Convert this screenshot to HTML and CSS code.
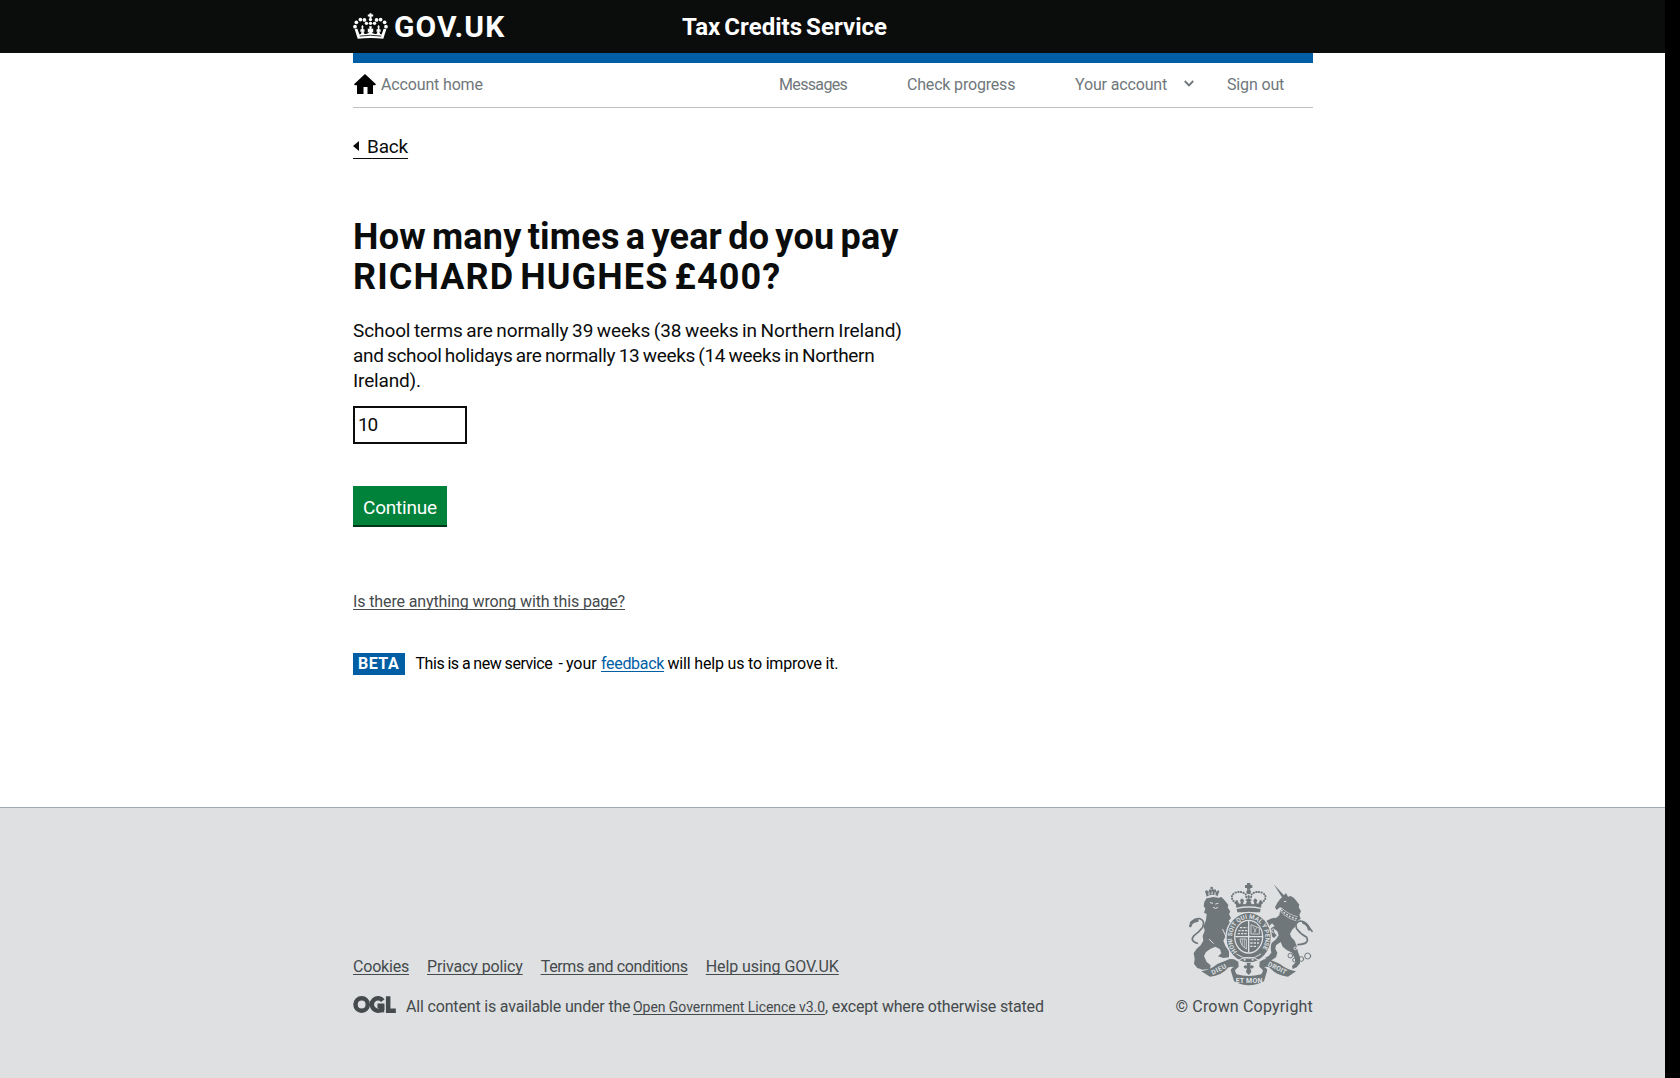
FILE: index.html
```html
<!DOCTYPE html>
<html lang="en">
<head>
<meta charset="utf-8">
<title>Tax Credits Service - GOV.UK</title>
<link rel="stylesheet" href="styles.css">
</head>
<body>
<div class="page">
  <header class="header">
    <div class="container header-inner">
      <a class="logo" href="#">
        <svg class="crown" viewBox="39 39 104 76" aria-hidden="true">
          <g fill="#fff">
            <path d="M88 39H94V43H99V49H94V55H88V49H83V43H88Z"/>
            <circle cx="91" cy="58" r="5"/><circle cx="91" cy="69" r="5"/>
            <circle cx="61" cy="58" r="5.5"/><circle cx="49" cy="66" r="5.5"/><circle cx="45" cy="79" r="5.5"/><circle cx="73" cy="59" r="5.500"/><circle cx="79" cy="69" r="5"/>
            <circle cx="121" cy="58" r="5.5"/><circle cx="133" cy="66" r="5.5"/><circle cx="137" cy="79" r="5.5"/><circle cx="109" cy="59" r="5.500"/><circle cx="103" cy="69" r="5"/>
            <path d="M44 87L52 85L58 102Q64 101 65 93L61 95V87H65L64 78L67 74L70 78L69 87H73V95L70 93Q71 101 78 101Q86 100 88 94L83 96V84L88 87L87 78H95L94 87L99 84V96L94 94Q96 100 104 101Q111 101 112 93L109 95V87H113L112 78L115 74L118 78L117 87H121V95L117 93Q118 101 124 102L130 85L138 87L129 115Q91 110 53 115Z"/>
          </g>
          <path d="M59 107Q91 102 123 107" stroke="#0b0c0c" stroke-width="2.500" fill="none"/>
        </svg>
        <span class="logo-text">GOV.UK</span>
      </a>
      <span class="service-name">Tax Credits Service</span>
    </div>
  </header>
  <div class="container">
    <nav class="nav">
      <a class="nav-home" href="#">
        <svg class="home" viewBox="0 0 22 20" aria-hidden="true"><path d="M11 0l11 10.300-1 .9h-2V20h-5.500v-7h-4v7H3v-8.800H1l-1-.9z"/></svg>
        <span>Account home</span>
      </a>
      <a class="nav-item messages" href="#">Messages</a>
      <a class="nav-item progress" href="#">Check progress</a>
      <a class="nav-item account" href="#">Your account
        <svg class="chevron" viewBox="0 0 10 7" aria-hidden="true"><path d="M.8 1L5 5.300 9.200 1" fill="none" stroke="currentColor" stroke-width="1.900"/></svg>
      </a>
      <a class="nav-item signout" href="#">Sign out</a>
    </nav>
    <main class="main">
      <a class="back" href="#"><span class="back-arrow"></span>Back</a>
      <h1 class="heading"><span class="heading-first">How many times a year do you pay</span> <span class="heading-second">RICHARD HUGHES £400?</span></h1>
      <p class="hint"><span class="hint-first">School terms are normally 39 weeks (38 weeks in Northern Ireland)</span> <span class="hint-second">and school holidays are normally 13 weeks (14 weeks in Northern</span> <span class="hint-third">Ireland).</span></p>
      <input class="input" type="text" value="10" aria-label="Times a year">
      <button class="button" type="button">Continue</button>
      <a class="problem" href="#">Is there anything wrong with this page?</a>
      <div class="phase">
        <strong class="tag">BETA</strong>
        <span class="phase-start">This is a new service</span>
        <span class="phase-your">- your</span>
        <a class="feedback" href="#">feedback</a>
        <span class="phase-end">will help us to improve it.</span>
      </div>
    </main>
  </div>
  <footer class="footer">
    <div class="container footer-inner">
      <div class="footer-meta">
        <div class="footer-links">
          <a class="cookies" href="#">Cookies</a>
          <a class="privacy" href="#">Privacy policy</a>
          <a class="terms" href="#">Terms and conditions</a>
          <a class="help" href="#">Help using GOV.UK</a>
        </div>
        <div class="licence">
          <svg class="ogl" viewBox="0 0 128 51" aria-label="OGL">
            <g fill="none" stroke="#454a4c" stroke-width="13.500">
              <circle cx="25.500" cy="25.500" r="18.500"/>
              <path d="M89 14A18.500 18.500 0 1 0 87 39V29H73"/>
              <path d="M105 1V44H128"/>
            </g>
            <path fill="#454a4c" d="M83 27h10v22H83z"/>
          </svg>
          <span class="licence-text">All content is available under the</span>
          <a class="licence-link" href="#">Open Government Licence v3.0</a><span class="licence-end">, except where otherwise stated</span>
        </div>
      </div>
      <div class="copyright">
        <svg class="arms" viewBox="84 36 375 312" aria-hidden="true">
          <g fill="#6f777b">
            <!-- lion -->
            <path d="M140 84L165 80L185 82L195 92L205 105L203 112L211 125L207 132L213 145L206 152L213 162L214 178L218 196L214 214L205 208L196 200L190 212L196 228L207 244L207 262L190 264L174 259L184 250L180 238L166 230L152 236L138 246L132 258L140 276L152 286L150 297L128 299L112 294L102 282L104 266L101 250L110 236L122 226L130 212L128 198L134 182L131 168L138 150L140 132L132 128L136 116L131 108L133 96Z"/>
            <path d="M139 76L135 64L141 60L145 66L149 57L155 60L158 55L162 60L166 57L170 66L174 60L178 64L173 78Q155 70 139 80Z"/>
            <circle cx="155" cy="54" r="4"/>
            <!-- unicorn -->
            <path d="M341 43L372 76L378 69L384 80L392 78L402 84L410 94L418 104L416 112L423 124L418 134L422 146L414 152L408 162L404 172L396 180L390 192L394 202L404 212L410 228L414 246L420 262L420 280L410 292L398 297L396 288L406 278L404 264L396 248L380 240L368 230L362 216L348 226L346 236L352 248L348 262L332 272L314 264L326 258L334 248L332 234L334 220L348 208L356 196L352 184L344 178L344 190L350 196L342 204L332 196L328 184L334 174L344 168L336 160L328 168L330 182L322 180L316 166L320 152L332 146L348 142L358 136L360 124L366 114L360 112L350 120L345 112L352 98L360 88L366 82Z"/>
            <!-- scroll -->
            <path d="M124 304Q150 300 172 282L202 270Q206 266 222 268L235 275L236 290L226 299Q224 290 216 290L206 292Q184 318 150 320Z"/>
            <path d="M408 304Q382 300 360 282L332 270Q326 266 312 268L299 275L298 290L308 299Q310 290 318 290L328 292Q350 318 384 320Z"/>
            <path d="M212 300Q217 288 229 292L225 303L230 313Q266 323 304 313L309 303L305 292Q317 288 322 300L312 334Q266 358 222 334Z"/>
            <path d="M256 296L250 290L256 285L261 288L260 280L266 270L272 280L271 288L276 285L282 290L276 296L271 294L274 306L266 315L258 306L261 294Z"/>
            <!-- central crown -->
            <path d="M261 39H271V45H277V54H271V59H261V54H255V45H261Z"/>
            <circle cx="266" cy="66" r="7"/><circle cx="266" cy="80" r="4"/>
            <path d="M229 113L226 92L232 90L237 101L243 100L240 91L246 85L252 91L249 102L257 103L261 94L256 90L266 84L276 90L271 94L275 103L283 102L280 91L286 85L292 91L289 100L295 101L300 90L306 92L303 113Q266 105 229 113Z"/>
            <path d="M230 117Q266 110 302 117L300 127H232Z"/>
          </g>
          <!-- tails and chain -->
          <g fill="none" stroke="#6f777b" stroke-linecap="round" stroke-linejoin="round">
            <path stroke-width="5" d="M112 220Q88 212 102 197Q118 186 128 172Q136 152 120 146Q104 145 92 158"/>
            <path stroke-width="8" d="M112 152Q94 154 91 168"/>
            <path stroke-width="5" d="M414 224Q450 222 440 202Q420 190 410 176Q403 158 420 153Q434 153 444 168L456 184"/>
            <path stroke-width="8" d="M430 158Q444 162 447 178"/>
            <circle cx="391" cy="257" r="7" stroke-width="3"/><circle cx="404" cy="270" r="6" stroke-width="3"/><circle cx="424" cy="267" r="7" stroke-width="3"/><circle cx="443" cy="258" r="9" stroke-width="3"/>
            <path stroke-width="6" stroke-dasharray="1 7" d="M227 99Q206 82 223 69Q244 61 257 73L260 88M305 99Q326 82 309 69Q288 61 275 73L272 88"/>
          </g>
          <!-- light details on the supporters -->
          <g fill="none" stroke="#dee0e2" stroke-linecap="round">
            <path stroke-width="3" d="M136 84Q156 75 178 82M147 68V74M156 66V72M165 68V74M151 98L158 100M174 100L167 102M160 113Q168 118 173 113M148 208L160 220M188 178L198 200"/>
            <path stroke-width="2" d="M362 125Q382 146 408 152M366 115Q386 134 412 140"/>
            <path stroke-width="5" stroke-dasharray="1 9" d="M365 121Q384 140 408 146"/>
            <circle cx="347" cy="139" r="4" stroke-width="3"/><circle cx="340" cy="182" r="5" stroke-width="3"/><circle cx="411" cy="192" r="4" stroke-width="3"/><circle cx="406" cy="235" r="4" stroke-width="3"/>
            <path stroke-width="3" d="M373 95L378 94"/>
          </g>
          <!-- garter and shield -->
          <ellipse cx="266" cy="202" rx="70" ry="77" fill="#dee0e2"/>
          <ellipse cx="266" cy="203" rx="66" ry="74" fill="#6f777b"/>
          <ellipse cx="266" cy="200" rx="44" ry="51" fill="#dee0e2"/>
          <ellipse cx="266" cy="200" rx="40" ry="47" fill="#6f777b"/>
          <path d="M266 153V247M226 200H306" stroke="#dee0e2" stroke-width="4"/>
          <path d="M240 173H262M235 182H262M233 191H262M271 209H299M271 219H297M271 229H292" fill="none" stroke="#dee0e2" stroke-width="4" stroke-dasharray="7 3"/>
          <path d="M273 164L298 174V192H273ZM240 207H259V237Q242 228 240 207Z" fill="none" stroke="#dee0e2" stroke-width="2.500"/>
          <path d="M247 208V226M253 208V232M279 170L287 186M290 172L281 190" stroke="#dee0e2" stroke-width="2"/>
          <path d="M229 252Q266 278 303 252M232 272Q266 252 300 272" fill="none" stroke="#dee0e2" stroke-width="3"/>
          <circle cx="254" cy="269" r="3" fill="#dee0e2"/><circle cx="278" cy="269" r="3" fill="#dee0e2"/>
          <path id="motto" d="M232 245A50 57 0 1 1 301 244" fill="none"/>
          <g class="arms-text" fill="#dee0e2">
            <text font-size="19"><textPath href="#motto" textLength="248" lengthAdjust="spacingAndGlyphs">HONI SOIT QUI MAL Y PENSE</textPath></text>
            <text font-size="21" x="227" y="339" textLength="80">ET MON</text>
            <text font-size="20" transform="translate(158 315) rotate(-27)" textLength="48">DIEU</text>
            <text font-size="20" transform="translate(322 287) rotate(26)" textLength="60">DROIT</text>
          </g>
        </svg>
        <span class="copyright-text">© Crown Copyright</span>
      </div>
    </div>
  </footer>
</div>
</body>
</html>
```
FILE: styles.css
```css
* { box-sizing: border-box; }
html { background: #000; }
body {
  margin: 0;
  font-family: Roboto, "Liberation Sans", sans-serif;
  font-size: 16px;
  line-height: 21px;
  color: #0b0c0c;
}
a { color: inherit; text-decoration: none; }
.page {
  display: flex;
  flex-direction: column;
  width: 1665px;
  min-height: 1078px;
  background: #fff;
}
.container { width: 960px; margin: 0 352px 0 353px; }

.header { height: 53px; background: #0b0c0c; color: #fff; }
.header-inner { display: flex; align-items: center; height: 53px; }
.logo { display: flex; align-items: center; width: 329px; }
.crown { width: 35px; height: 26px; margin: 0 6px 1px 0; }
.logo-text { font-size: 30px; font-weight: 700; line-height: 53px; letter-spacing: 1.1px; }
.service-name {
  padding-top: 1px;
  font-size: 24px;
  font-weight: 700;
  letter-spacing: 0.04px;
  word-spacing: -2px;
  white-space: nowrap;
}

.nav {
  display: flex;
  height: 55px;
  border-top: 10px solid #005ea5;
  border-bottom: 1px solid #bfc1c3;
  color: #6f777b;
  line-height: 43px;
  letter-spacing: -0.15px;
  white-space: nowrap;
}
.nav-home { display: flex; align-items: center; width: 426px; height: 43px; }
.home { width: 22px; height: 20px; margin: -1px 5px 0 1px; fill: #000; }
.messages { width: 128px; letter-spacing: -0.65px; }
.progress { width: 168px; letter-spacing: -0.18px; }
.account { display: flex; align-items: center; width: 152px; height: 43px; }
.chevron { width: 10px; height: 7px; margin: -3px 0 0 16.5px; }

.main { display: flex; flex-direction: column; align-items: flex-start; }
.back {
  display: flex;
  align-items: center;
  margin-top: 27px;
  border-bottom: 1px solid #0b0c0c;
  font-size: 19px;
  line-height: 23px;
  letter-spacing: -0.2px;
}
.back-arrow {
  margin: -1px 8px 0 0;
  border: 5px solid transparent;
  border-left: 0;
  border-right: 6px solid #0b0c0c;
}
.heading { margin: 58px 0 0; font-size: 36px; font-weight: 700; line-height: 40px; }
.heading span, .hint span { display: block; white-space: nowrap; }
.heading-first { letter-spacing: 0.21px; word-spacing: -3px; }
.heading-second { letter-spacing: 1.1px; word-spacing: -4px; }
.hint { margin: 21px 0 0; font-size: 19px; line-height: 25px; }
.hint-first { letter-spacing: -0.1px; word-spacing: -1px; }
.hint-second { letter-spacing: -0.33px; word-spacing: -1px; }
.hint-third { letter-spacing: -0.15px; }
.input {
  width: 114px;
  height: 38px;
  margin: 13px 0 0;
  padding: 2px 3px 4px;
  border: 2px solid #0b0c0c;
  background: #fff;
  color: #0b0c0c;
  font: 19px/28px Roboto, sans-serif;
  letter-spacing: -1.2px;
}
.button {
  width: 94px;
  height: 39px;
  margin: 42px 0 0;
  padding: 4px 0 0;
  border: 0;
  background: #00823b;
  box-shadow: 0 2px 0 #003618;
  color: #fff;
  font: 19px/25px Roboto, sans-serif;
  letter-spacing: -0.22px;
}
.problem, .footer-links a, .feedback, .licence-link {
  text-decoration: underline 1px;
  text-underline-offset: 2px;
  text-decoration-skip-ink: none;
  white-space: nowrap;
}
.problem { margin-top: 66px; color: #454a4c; letter-spacing: -0.12px; }
.phase { display: flex; height: 22px; margin-top: 41px; color: #000; white-space: nowrap; }
.tag {
  width: 52px;
  margin-right: 10.5px;
  padding-left: 5px;
  background: #005ea5;
  color: #fff;
  letter-spacing: 0.5px;
}
.phase-start { width: 143px; letter-spacing: -0.45px; word-spacing: -0.3px; }
.phase-your { width: 42.5px; letter-spacing: 0; word-spacing: -1px; }
.feedback { width: 63px; margin-right: 3.5px; color: #005ea5; letter-spacing: -0.32px; }
.phase-end { letter-spacing: -0.18px; }

.footer {
  height: 271px;
  margin-top: 132px;
  border-top: 1px solid #a1acb2;
  background: #dee0e2;
  color: #454a4c;
}
.footer-inner { display: flex; justify-content: space-between; height: 210px; align-items: flex-end; white-space: nowrap; }
.footer-links { display: flex; gap: 18px; }
.cookies { letter-spacing: -0.2px; }
.privacy { letter-spacing: -0.13px; }
.terms { letter-spacing: -0.35px; }
.help { letter-spacing: -0.08px; }
.licence { display: flex; margin-top: 19px; }
.ogl { width: 43px; height: 17px; margin-right: 10px; }
.licence-text { width: 227px; letter-spacing: -0.17px; }
.licence-link { font-size: 14px; line-height: 22px; letter-spacing: -0.05px; }
.licence-end { letter-spacing: -0.18px; }
.copyright { display: flex; flex-direction: column; align-items: flex-end; padding-bottom: 1px; }
.arms { width: 125px; height: 104px; margin-bottom: 10px; }
.arms-text { font-family: Roboto, sans-serif; font-weight: 700; }
.copyright-text { letter-spacing: 0.18px; }
```
